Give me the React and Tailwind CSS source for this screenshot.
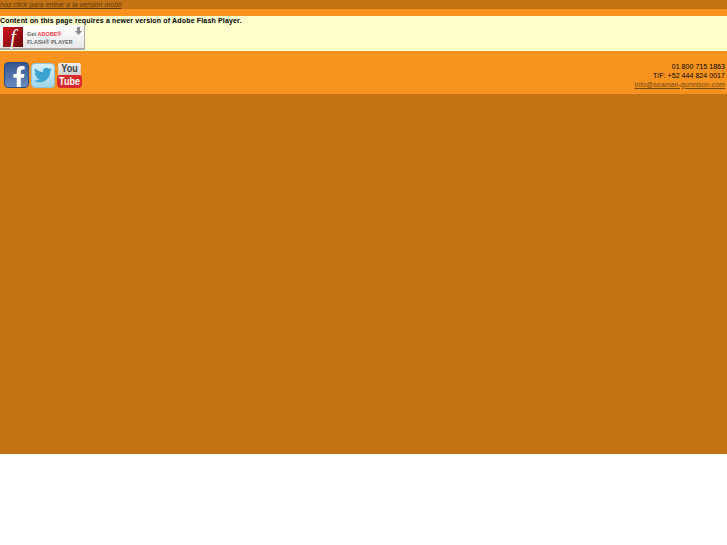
import React from 'react';
import { FaFacebookF, FaTwitter } from 'react-icons/fa';

const FONT = "font-['Liberation_Sans',Arial,sans-serif]";

// Get Adobe Flash Player badge
const FlashBadge = () => (
    <div className="w-[85px] h-[25px] bg-gradient-to-b from-white to-[#e8e8e8] border-b-2 border-r border-[#a9a9a9] flex items-start pl-[3px] pt-[2px] relative">
        <div className="w-[20px] h-[20px] bg-gradient-to-br from-[#d4141c] to-[#6d0a0e] flex items-center justify-center shrink-0">
            <span className="text-white italic text-[20px] leading-none font-['Liberation_Serif',serif]">f</span>
        </div>
        <div className="ml-[4px] mt-[3px] text-[5.5px] leading-[8px] font-bold text-[#666]">
            <div>Get <span className="text-[#f0353c]">ADOBE®</span></div>
            <div>FLASH® PLAYER</div>
        </div>
        <svg className="absolute right-[2px] top-[2px]" width="7" height="8" viewBox="0 0 7 8">
            <path d="M2 0h3v4h2L3.5 8 0 4h2z" fill="#8a8a8a" />
        </svg>
    </div>
);

const SocialIcons = () => (
    <div className="flex items-center gap-[2px]">
        <div className="w-[25px] h-[26px] rounded-[4px] border border-[#2d4a80] bg-gradient-to-b from-[#36568f] to-[#6a8cc0] flex items-end justify-center overflow-hidden">
            <FaFacebookF className="text-white w-[14px] h-[21px] ml-[4px]" />
        </div>
        <div className="w-[24px] h-[25px] rounded-[4px] border border-[#8fc4d8] bg-gradient-to-b from-[#d6eef5] to-[#9fd6e8] flex items-center justify-center">
            <FaTwitter className="text-[#3aa3d0] w-[18px] h-[18px]" />
        </div>
        <div className="w-[25px] h-[25px] rounded-[4px] overflow-hidden flex flex-col font-bold text-center">
            <div className="h-[12px] bg-gradient-to-b from-[#f0f0f0] to-[#d0d0d0] text-[#3a3a3a] text-[10px] leading-[12px] scale-x-90">You</div>
            <div className="h-[13px] bg-[#d9282e] text-white text-[10px] leading-[13px] rounded-[3px]"><div className="scale-x-90">Tube</div></div>
        </div>
    </div>
);

export default function App() {
    return (
        <div className={`${FONT} h-[454px] bg-[#c47314] text-black`}>
            <div className="h-[9px]">
                <a href="#" className="block italic underline text-[#5b3a10] text-[7px] leading-[9px] tracking-[0.05px]">haz click para entrar a la version mobil</a>
            </div>
            <div className="h-[7px] bg-[#f7931e]" />
            <div className="h-[35px] bg-[#ffffcc]">
                <p className="font-bold text-[7px] leading-[9px] tracking-[0.16px]">Content on this page requires a newer version of Adobe Flash Player.</p>
                <FlashBadge />
            </div>
            <div className="h-[43px] bg-[#f7931e] flex items-start justify-between pt-[11px] pl-[4px] pr-[2px]">
                <SocialIcons />
                <div className="text-right text-[7px] leading-[9px] tracking-[0.05px] -mt-[0.5px]">
                    <div className="font-medium">01 800 715 1863</div>
                    <div>T/F: +52 444 824 0017</div>
                    <a href="#" className="underline text-[#6b4a1a]">info@seaman-gunnison.com</a>
                </div>
            </div>
        </div>
    );
}
